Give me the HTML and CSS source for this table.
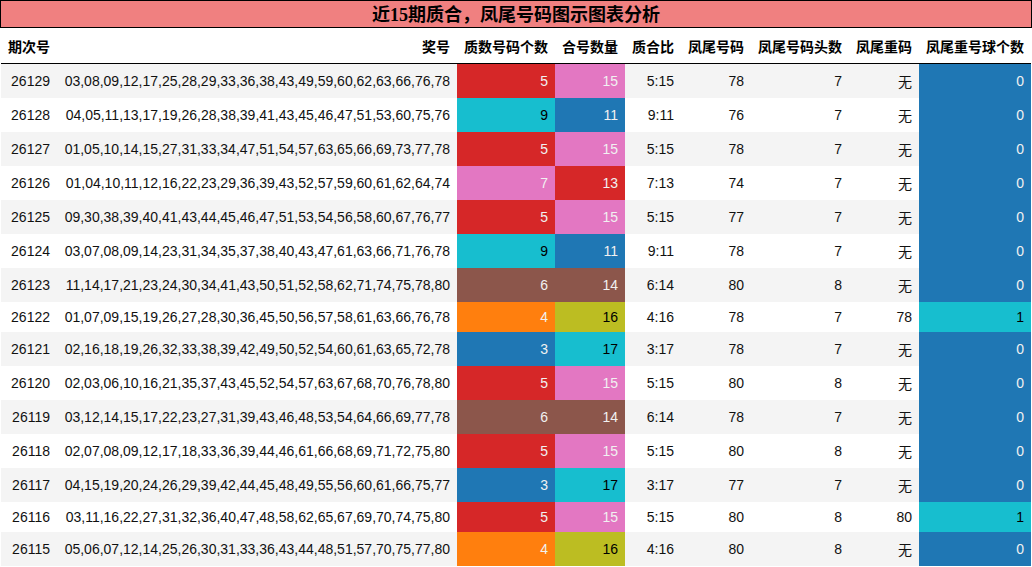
FILE: index.html
```html
<!DOCTYPE html>
<html lang="zh">
<head>
<meta charset="utf-8">
<title>近15期质合，凤尾号码图示图表分析</title>
<link rel="stylesheet" href="styles.css">
</head>
<body>
<div class="page">
  <div class="title">近<span class="latin">15</span>期质合，凤尾号码图示图表分析</div>
  <table class="grid">
    <colgroup>
      <col class="w56"><col class="w400"><col class="w98"><col class="w70"><col class="w56"><col class="w70"><col class="w98"><col class="w70"><col class="w112">
    </colgroup>
    <thead>
      <tr><th>期次号</th><th>奖号</th><th>质数号码个数</th><th>合号数量</th><th>质合比</th><th>凤尾号码</th><th>凤尾号码头数</th><th>凤尾重码</th><th>凤尾重号球个数</th></tr>
    </thead>
    <tbody>
      <tr><td>26129</td><td>03,08,09,12,17,25,28,29,33,36,38,43,49,59,60,62,63,66,76,78</td><td class="c-red">5</td><td class="c-pink">15</td><td>5:15</td><td>78</td><td>7</td><td><span class="cjk">无</span></td><td class="c-blue">0</td></tr>
      <tr><td>26128</td><td>04,05,11,13,17,19,26,28,38,39,41,43,45,46,47,51,53,60,75,76</td><td class="c-cyan">9</td><td class="c-blue">11</td><td>9:11</td><td>76</td><td>7</td><td><span class="cjk">无</span></td><td class="c-blue">0</td></tr>
      <tr><td>26127</td><td>01,05,10,14,15,27,31,33,34,47,51,54,57,63,65,66,69,73,77,78</td><td class="c-red">5</td><td class="c-pink">15</td><td>5:15</td><td>78</td><td>7</td><td><span class="cjk">无</span></td><td class="c-blue">0</td></tr>
      <tr><td>26126</td><td>01,04,10,11,12,16,22,23,29,36,39,43,52,57,59,60,61,62,64,74</td><td class="c-pink">7</td><td class="c-red">13</td><td>7:13</td><td>74</td><td>7</td><td><span class="cjk">无</span></td><td class="c-blue">0</td></tr>
      <tr><td>26125</td><td>09,30,38,39,40,41,43,44,45,46,47,51,53,54,56,58,60,67,76,77</td><td class="c-red">5</td><td class="c-pink">15</td><td>5:15</td><td>77</td><td>7</td><td><span class="cjk">无</span></td><td class="c-blue">0</td></tr>
      <tr><td>26124</td><td>03,07,08,09,14,23,31,34,35,37,38,40,43,47,61,63,66,71,76,78</td><td class="c-cyan">9</td><td class="c-blue">11</td><td>9:11</td><td>78</td><td>7</td><td><span class="cjk">无</span></td><td class="c-blue">0</td></tr>
      <tr><td>26123</td><td>11,14,17,21,23,24,30,34,41,43,50,51,52,58,62,71,74,75,78,80</td><td class="c-brown">6</td><td class="c-brown">14</td><td>6:14</td><td>80</td><td>8</td><td><span class="cjk">无</span></td><td class="c-blue">0</td></tr>
      <tr><td>26122</td><td>01,07,09,15,19,26,27,28,30,36,45,50,56,57,58,61,63,66,76,78</td><td class="c-orange">4</td><td class="c-olive">16</td><td>4:16</td><td>78</td><td>7</td><td>78</td><td class="c-cyan">1</td></tr>
      <tr><td>26121</td><td>02,16,18,19,26,32,33,38,39,42,49,50,52,54,60,61,63,65,72,78</td><td class="c-blue">3</td><td class="c-cyan">17</td><td>3:17</td><td>78</td><td>7</td><td><span class="cjk">无</span></td><td class="c-blue">0</td></tr>
      <tr><td>26120</td><td>02,03,06,10,16,21,35,37,43,45,52,54,57,63,67,68,70,76,78,80</td><td class="c-red">5</td><td class="c-pink">15</td><td>5:15</td><td>80</td><td>8</td><td><span class="cjk">无</span></td><td class="c-blue">0</td></tr>
      <tr><td>26119</td><td>03,12,14,15,17,22,23,27,31,39,43,46,48,53,54,64,66,69,77,78</td><td class="c-brown">6</td><td class="c-brown">14</td><td>6:14</td><td>78</td><td>7</td><td><span class="cjk">无</span></td><td class="c-blue">0</td></tr>
      <tr><td>26118</td><td>02,07,08,09,12,17,18,33,36,39,44,46,61,66,68,69,71,72,75,80</td><td class="c-red">5</td><td class="c-pink">15</td><td>5:15</td><td>80</td><td>8</td><td><span class="cjk">无</span></td><td class="c-blue">0</td></tr>
      <tr><td>26117</td><td>04,15,19,20,24,26,29,39,42,44,45,48,49,55,56,60,61,66,75,77</td><td class="c-blue">3</td><td class="c-cyan">17</td><td>3:17</td><td>77</td><td>7</td><td><span class="cjk">无</span></td><td class="c-blue">0</td></tr>
      <tr><td>26116</td><td>03,11,16,22,27,31,32,36,40,47,48,58,62,65,67,69,70,74,75,80</td><td class="c-red">5</td><td class="c-pink">15</td><td>5:15</td><td>80</td><td>8</td><td>80</td><td class="c-cyan">1</td></tr>
      <tr><td>26115</td><td>05,06,07,12,14,25,26,30,31,33,36,43,44,48,51,57,70,75,77,80</td><td class="c-orange">4</td><td class="c-olive">16</td><td>4:16</td><td>80</td><td>8</td><td><span class="cjk">无</span></td><td class="c-blue">0</td></tr>
    </tbody>
  </table>
</div>
</body>
</html>
```

FILE: styles.css
```css
html, body {
  margin: 0;
  padding: 0;
  background: #ffffff;
}

.page {
  width: 1032px;
  font-family: "Liberation Sans", "Noto Sans CJK SC", sans-serif;
  color: #111111;
}

.title {
  box-sizing: border-box;
  width: 1032px;
  height: 28px;
  border: 1px solid #000000;
  background: #f08080;
  text-align: center;
  font-family: "Noto Sans CJK SC", sans-serif;
  font-weight: bold;
  font-size: 18px;
  line-height: 25px;
  color: #000000;
}

.title .latin {
  font-family: "Liberation Serif", serif;
}

.grid {
  border-collapse: collapse;
  border-spacing: 0;
  table-layout: fixed;
  width: 1030px;
  margin-left: 1px;
  font-size: 14px;
}

.w56 { width: 56px; }
.w400 { width: 400px; }
.w98 { width: 98px; }
.w70 { width: 70px; }
.w112 { width: 112px; }

.grid th {
  font-family: "Noto Sans CJK SC", sans-serif;
  font-weight: bold;
  font-size: 14px;
  line-height: 20px;
  padding: 8px 7px 7px 7px;
  text-align: right;
  white-space: nowrap;
  color: #000000;
  border-bottom: 1px solid #000000;
}

.grid td {
  padding: 7px 7px;
  line-height: 16px;
  text-align: right;
  white-space: nowrap;
  overflow: hidden;
}

.grid tbody tr:nth-child(odd) {
  background: #f4f4f4;
}

.grid tbody tr:nth-child(even) {
  background: #ffffff;
}

.cjk {
  font-family: "Noto Sans CJK SC", sans-serif;
  line-height: 20px;
}

.c-red { background: #d62728; color: #f1f1f1; }
.c-pink { background: #e377c2; color: #f1f1f1; }
.c-cyan { background: #17becf; color: #000000; }
.c-blue { background: #1f77b4; color: #f1f1f1; }
.c-brown { background: #8c564b; color: #f1f1f1; }
.c-orange { background: #ff7f0e; color: #f1f1f1; }
.c-olive { background: #bcbd22; color: #000000; }
```
